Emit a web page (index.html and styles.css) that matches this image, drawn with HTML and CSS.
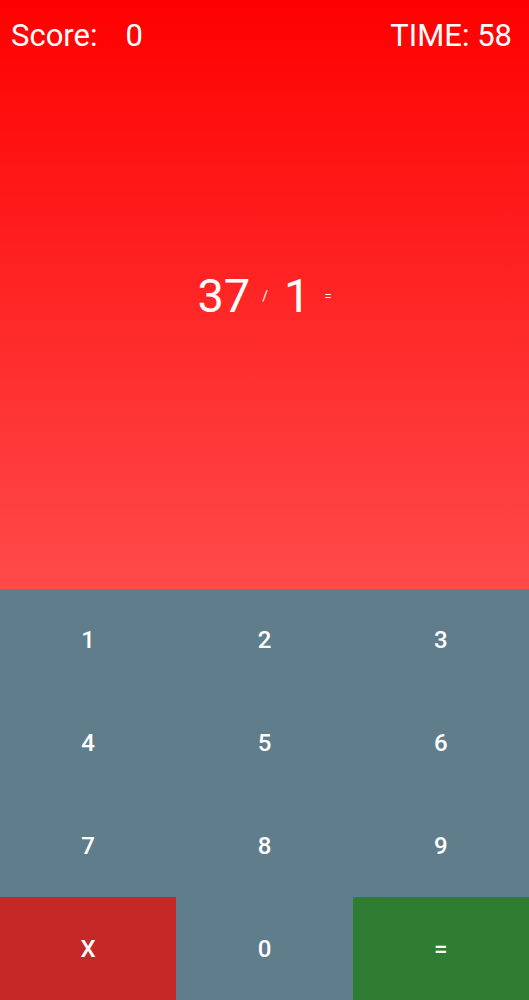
FILE: index.html
```html
<!DOCTYPE html>
<html>
<head>
<meta charset="utf-8">
<link rel="stylesheet" href="styles.css">
</head>
<body>
<div class="app">
  <section class="stage">
    <header class="topbar">
      <div class="score"><span>Score:</span><span class="score-val">0</span></div>
      <div class="time">TIME: 58</div>
    </header>
    <div class="problem">
      <span class="num">37</span>
      <span class="op">/</span>
      <span class="num">1</span>
      <span class="eq">=</span>
    </div>
  </section>
  <section class="keypad">
    <div class="key">1</div>
    <div class="key">2</div>
    <div class="key">3</div>
    <div class="key">4</div>
    <div class="key">5</div>
    <div class="key">6</div>
    <div class="key">7</div>
    <div class="key">8</div>
    <div class="key">9</div>
    <div class="key key-clear">X</div>
    <div class="key">0</div>
    <div class="key key-enter">=</div>
  </section>
</div>
</body>
</html>
```

FILE: styles.css
```css
* { box-sizing: border-box; }
html, body {
  margin: 0;
  padding: 0;
  height: 100%;
}
body {
  font-family: Roboto, "Liberation Sans", sans-serif;
  color: #fff;
  background: #607d8b;
}
.app {
  display: flex;
  flex-direction: column;
  height: 1000px;
  width: 529px;
}
.stage {
  height: 589px;
  background: linear-gradient(180deg, #ff0000 0%, #ff2525 50%, #ff4a4a 100%);
  display: flex;
  flex-direction: column;
}
.topbar {
  display: flex;
  justify-content: space-between;
  align-items: center;
  padding: 14px 17px 0 11px;
  font-size: 31px;
  line-height: 44px;
}
.score-val { margin-left: 28px; }
.problem {
  display: flex;
  align-items: center;
  justify-content: center;
  margin-top: 208px;
  height: 60px;
}
.num {
  font-size: 47px;
  line-height: 56px;
}
.op {
  font-size: 14px;
  margin: 0 16px 0 12px;
}
.eq {
  font-size: 13px;
  margin-left: 14px;
}
.keypad {
  flex: 1;
  display: grid;
  grid-template-columns: 1fr 1fr 1fr;
  grid-template-rows: repeat(4, 1fr);
  background: #607d8b;
}
.key {
  display: flex;
  align-items: center;
  justify-content: center;
  font-size: 24px;
  font-weight: 500;
}
.key-clear { background: #c62828; }
.key-enter { background: #2e7d32; }
```
